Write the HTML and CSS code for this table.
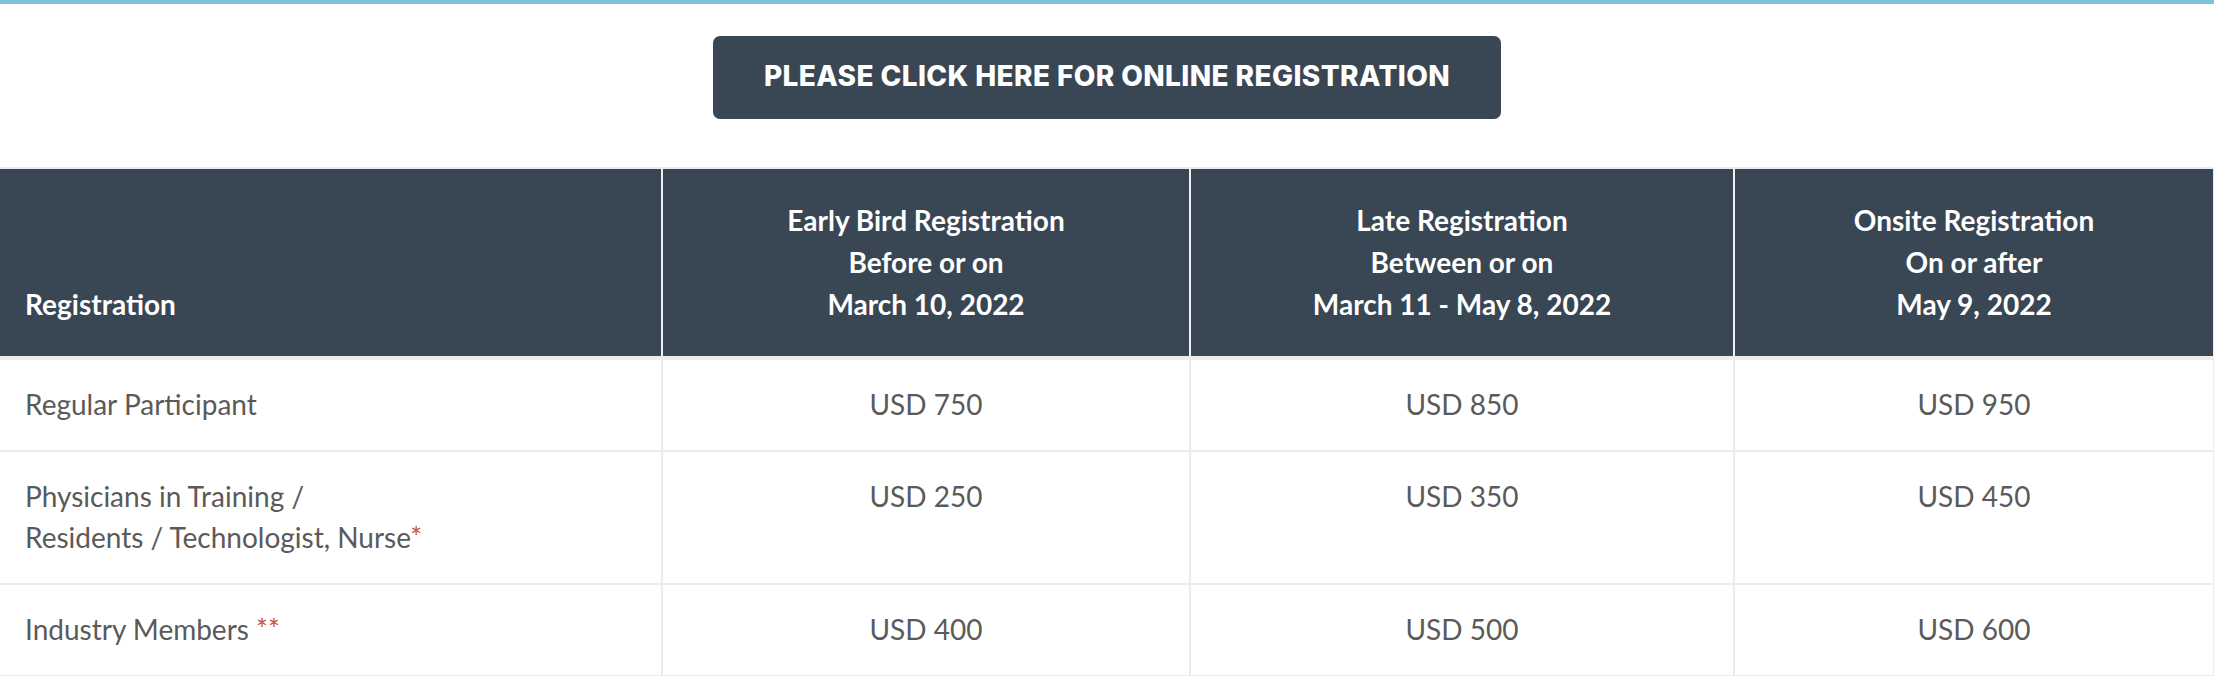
FILE: index.html
```html
<!DOCTYPE html>
<html lang="en">
<head>
<meta charset="utf-8">
<title>Registration Fees</title>
<link rel="stylesheet" href="styles.css">
</head>
<body>
<div class="topline"></div>
<div class="cta-wrap">
  <a class="cta" href="#">PLEASE CLICK HERE FOR ONLINE REGISTRATION</a>
</div>
<table class="fees">
  <colgroup>
    <col class="c1"><col class="c2"><col class="c3"><col class="c4">
  </colgroup>
  <thead>
    <tr>
      <th class="left">Registration</th>
      <th>Early Bird Registration<br>Before or on<br>March 10, 2022</th>
      <th>Late Registration<br>Between or on<br>March 11 - May 8, 2022</th>
      <th>Onsite Registration<br>On or after<br>May 9, 2022</th>
    </tr>
  </thead>
  <tbody>
    <tr>
      <td class="left">Regular Participant</td>
      <td>USD 750</td>
      <td>USD 850</td>
      <td>USD 950</td>
    </tr>
    <tr>
      <td class="left">Physicians in Training /<br>Residents / Technologist, Nurse<span class="ast">*</span></td>
      <td>USD 250</td>
      <td>USD 350</td>
      <td>USD 450</td>
    </tr>
    <tr>
      <td class="left">Industry Members <span class="ast">**</span></td>
      <td>USD 400</td>
      <td>USD 500</td>
      <td>USD 600</td>
    </tr>
  </tbody>
</table>
</body>
</html>
```
FILE: styles.css
```css
html, body {
  margin: 0;
  padding: 0;
  background: #ffffff;
}
body {
  font-family: "Lato", "Open Sans", sans-serif;
  color: #5a5a5a;
}
.topline {
  height: 4px;
  background: #7cc3da;
}
.cta-wrap {
  display: flex;
  justify-content: center;
  padding: 32px 0 48px;
}
.cta {
  display: block;
  width: 788px;
  box-sizing: border-box;
  padding: 26px 0 29px;
  background: #394654;
  border-radius: 7px;
  color: #ffffff;
  text-align: center;
  text-decoration: none;
  font-family: "Inter", "Open Sans", sans-serif;
  font-weight: 800;
  font-size: 28px;
  line-height: 28px;
  letter-spacing: 0.4px;
}
.fees {
  width: 2214px;
  border-collapse: collapse;
  table-layout: fixed;
  border-top: 2px solid #ececec;
}
.c1 { width: 662px; }
.c2 { width: 528px; }
.c3 { width: 544px; }
.c4 { width: 480px; }
.fees th {
  background: #394654;
  color: #ffffff;
  font-weight: 700;
  font-size: 28px;
  line-height: 42px;
  text-align: center;
  vertical-align: bottom;
  padding: 30px 25px 31px;
  border-left: 2px solid #f0f0f0;
  border-bottom: 4px solid #ececec;
}
.fees td {
  font-size: 28px;
  line-height: 41px;
  text-align: center;
  vertical-align: top;
  padding: 24px 25px 25px;
  border-left: 2px solid #ececec;
  border-bottom: 2px solid #ececec;
}
.fees th:last-child,
.fees td:last-child {
  border-right: 2px solid #ececec;
}
.fees th.left,
.fees td.left {
  text-align: left;
  border-left: none;
}
.ast {
  color: #c8553d;
}
```
